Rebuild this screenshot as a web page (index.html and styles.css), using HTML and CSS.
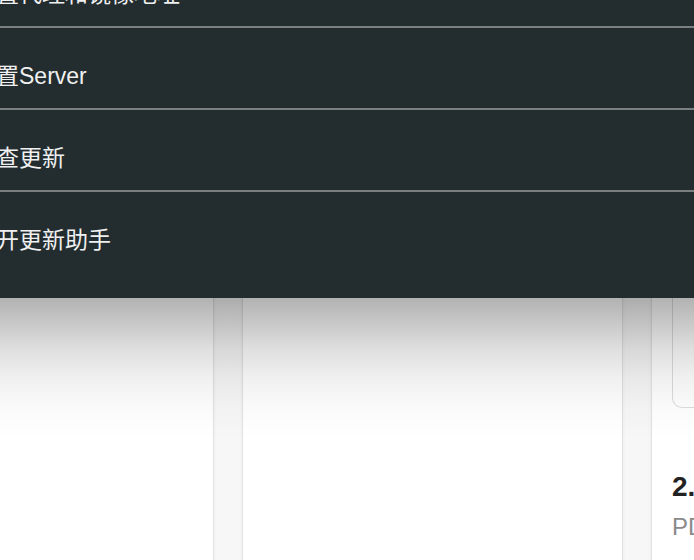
FILE: index.html
```html
<!DOCTYPE html>
<html lang="zh-CN">
<head>
<meta charset="utf-8">
<title>菜单</title>
<link rel="stylesheet" href="styles.css">
</head>
<body>
<div class="page">
  <div class="columns">
    <section class="card"></section>
    <section class="card"></section>
    <section class="card card-right">
      <div class="preview"></div>
      <div class="meta">
        <div class="version">2.4.1</div>
        <div class="desc">PDF 阅读器</div>
      </div>
    </section>
  </div>
  <nav class="menu">
    <ul class="menu-list">
      <li class="menu-item">设置代理和镜像地址</li>
      <li class="menu-item">设置Server</li>
      <li class="menu-item">检查更新</li>
      <li class="menu-item">打开更新助手</li>
    </ul>
  </nav>
</div>
</body>
</html>
```
FILE: styles.css
```css
html, body {
  margin: 0;
  padding: 0;
  height: 100%;
  overflow: hidden;
}
body {
  background: #f7f7f7;
  font-family: "Liberation Sans", "Noto Sans CJK SC", sans-serif;
}
.page {
  position: relative;
  height: 560px;
  overflow: hidden;
}
.columns {
  display: flex;
  gap: 28px;
  margin-left: -167px;
  height: 600px;
}
.card {
  flex: 0 0 381px;
  box-sizing: border-box;
  background: #fff;
  border: 1px solid #e2e2e2;
  box-shadow: 0 0 4px rgba(0, 0, 0, 0.05);
}
.card-right {
  padding: 0 20px;
}
.preview {
  height: 407px;
  box-sizing: border-box;
  border: 1px solid #dcdcdc;
  border-top: none;
  border-radius: 0 0 10px 10px;
}
.meta {
  padding-top: 62px;
}
.version {
  font-size: 28px;
  line-height: 34px;
  font-weight: 700;
  color: #222;
}
.desc {
  margin-top: 7px;
  font-size: 24px;
  line-height: 32px;
  color: #8a8a8a;
  white-space: nowrap;
}
.menu {
  position: absolute;
  top: -54px;
  left: -43px;
  right: -50px;
  background: #232d30;
  padding-bottom: 26px;
}
.menu::after {
  content: "";
  position: absolute;
  top: 100%;
  left: 0;
  right: 0;
  height: 140px;
  background: linear-gradient(
    rgba(0, 0, 0, 0.30) 0px,
    rgba(0, 0, 0, 0.20) 30px,
    rgba(0, 0, 0, 0.13) 50px,
    rgba(0, 0, 0, 0.06) 80px,
    rgba(0, 0, 0, 0.02) 110px,
    rgba(0, 0, 0, 0) 140px
  );
  pointer-events: none;
}
.menu-list {
  list-style: none;
  margin: 0;
  padding: 0;
}
.menu-item {
  height: 24px;
  padding: 36px 16px 20px;
  font-size: 23px;
  line-height: 24px;
  color: #f0f0f0;
  white-space: nowrap;
  border-bottom: 2px solid #7b7f80;
}
.menu-item:last-child {
  border-bottom: none;
}
```
